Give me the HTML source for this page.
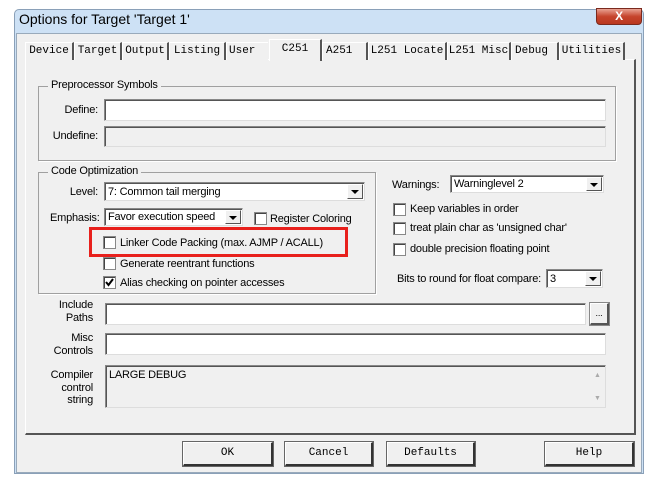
<!DOCTYPE html>
<html><head><meta charset="utf-8"><style>
*{box-sizing:border-box;margin:0;padding:0}
body{width:655px;height:482px;background:#fff;position:relative;overflow:hidden;font-family:"Liberation Sans",sans-serif;font-size:11px;letter-spacing:-0.2px;color:#000}
.a{position:absolute;white-space:nowrap}
.win{left:14px;top:9px;width:630px;height:465px;background:#cde1f5;border:1px solid #8aa0b8;border-radius:5px 5px 0 0}
.client{left:16px;top:33px;width:626px;height:440px;background:#f0f0f0;border:1px solid #9ab}
.title{left:19px;top:11px;font-size:14px;letter-spacing:0}
.close{left:596px;top:8px;width:46px;height:17px;border-radius:0 0 4px 4px;background:linear-gradient(#e9a293,#c6442d 50%,#b9381f);border:1px solid #7a2a1e;color:#fff;font-weight:bold;text-align:center;font-size:12px;line-height:15px}
.panel{left:25px;top:59px;width:611px;height:376px;background:#f0f0f0;border:1px solid #fff;border-right:2px solid #555;border-bottom:2px solid #555}
.tab{top:42px;height:18px;border:1px solid #fff;border-right:2px solid #555;border-bottom:none;font-family:"Liberation Mono",monospace;font-size:11px;letter-spacing:0;line-height:16px;text-align:center;background:#f0f0f0}
.sel{top:39px;height:22px;z-index:2}
.grp{border:1px solid #a0a0a0;box-shadow:1px 1px 0 #fff}
.leg{background:#f0f0f0;padding:0 3px}
.in{background:#fff;border:1px solid #888;border-right-color:#ddd;border-bottom-color:#ddd;box-shadow:inset 1px 1px 0 #555}
.dis{background:#f0f0f0}
.sl{background:#fff;border:1px solid #888;border-right-color:#ddd;border-bottom-color:#ddd;box-shadow:inset 1px 1px 0 #555;padding:1px 0 0 3px;line-height:16px;overflow:hidden}
.dd{position:absolute;right:1px;top:1px;width:16px;height:calc(100% - 2px);background:#f0f0f0;border:1px solid #fff;border-right-color:#555;border-bottom-color:#555}
.dd:after{content:"";position:absolute;left:3px;top:5px;border-left:4px solid transparent;border-right:4px solid transparent;border-top:4px solid #000}
.cb{width:13px;height:13px;background:#fff;border:1px solid #888;box-shadow:inset 1px 1px 0 #444}
.btn{top:442px;height:24px;border:1px solid #fff;border-right:2px solid #333;border-bottom:2px solid #333;outline:1px solid #666;font-family:"Liberation Mono",monospace;font-size:11px;letter-spacing:0;text-align:center;line-height:20px;background:#f0f0f0}
.r{text-align:right}
</style></head><body>
<div class="a win"></div>
<div class="a title">Options for Target 'Target 1'</div>
<div class="a close">X</div>
<div class="a client"></div>
<div class="a panel"></div>
<div class="a tab" style="left:25px;width:49px">Device</div>
<div class="a tab" style="left:74px;width:48px">Target</div>
<div class="a tab" style="left:122px;width:47px">Output</div>
<div class="a tab" style="left:169px;width:57px">Listing</div>
<div class="a tab" style="left:226px;width:42px;border-right:none;text-align:left;padding-left:2px">User</div>
<div class="a tab sel" style="left:269px;width:53px;line-height:18px">C251</div>
<div class="a tab" style="left:322px;width:46px;text-align:left;padding-left:3px">A251</div>
<div class="a tab" style="left:368px;width:79px">L251 Locate</div>
<div class="a tab" style="left:447px;width:64px">L251 Misc</div>
<div class="a tab" style="left:511px;width:48px;text-align:left;padding-left:3px">Debug</div>
<div class="a tab" style="left:559px;width:66px">Utilities</div>

<div class="a grp" style="left:38px;top:86px;width:578px;height:75px"></div>
<div class="a leg" style="left:48px;top:79px">Preprocessor Symbols</div>
<div class="a r" style="left:40px;top:104px;width:58px">Define:</div>
<div class="a in" style="left:104px;top:99px;width:502px;height:22px"></div>
<div class="a r" style="left:40px;top:130px;width:58px">Undefine:</div>
<div class="a in dis" style="left:104px;top:126px;width:502px;height:21px"></div>

<div class="a grp" style="left:38px;top:172px;width:338px;height:122px"></div>
<div class="a leg" style="left:48px;top:165px">Code Optimization</div>
<div class="a r" style="left:40px;top:186px;width:58px">Level:</div>
<div class="a sl" style="left:104px;top:182px;width:261px;height:19px">7: Common tail merging<div class="dd"></div></div>
<div class="a" style="left:50px;top:212px">Emphasis:</div>
<div class="a sl" style="left:104px;top:208px;width:139px;height:18px;line-height:15px">Favor execution speed<div class="dd"></div></div>
<div class="a cb" style="left:254px;top:212px"></div>
<div class="a" style="left:270px;top:213px">Register Coloring</div>
<div class="a cb" style="left:103px;top:257px"></div>
<div class="a" style="left:120px;top:258px">Generate reentrant functions</div>
<div class="a cb" style="left:103px;top:276px"></div>
<svg class="a" style="left:103px;top:276px" width="13" height="13"><path d="M3 6 L5.5 9 L10 3" stroke="#000" stroke-width="2" fill="none"/></svg>
<div class="a" style="left:120px;top:277px">Alias checking on pointer accesses</div>
<div class="a" style="left:89px;top:227px;width:259px;height:30px;border:3px solid #e8201c;background:#f0f0f0"></div>
<div class="a cb" style="left:103px;top:236px"></div>
<div class="a" style="left:120px;top:237px">Linker Code Packing (max. AJMP / ACALL)</div>

<div class="a" style="left:392px;top:179px">Warnings:</div>
<div class="a sl" style="left:450px;top:175px;width:154px;height:18px;line-height:15px">Warninglevel 2<div class="dd"></div></div>
<div class="a cb" style="left:393px;top:203px"></div>
<div class="a" style="left:410px;top:203px">Keep variables in order</div>
<div class="a cb" style="left:393px;top:222px"></div>
<div class="a" style="left:410px;top:222px">treat plain char as 'unsigned char'</div>
<div class="a cb" style="left:393px;top:243px"></div>
<div class="a" style="left:410px;top:243px">double precision floating point</div>
<div class="a" style="left:397px;top:273px">Bits to round for float compare:</div>
<div class="a sl" style="left:546px;top:269px;width:57px;height:19px">3<div class="dd"></div></div>

<div class="a r" style="left:40px;top:299px;width:53px;line-height:13px">Include<br>Paths</div>
<div class="a in" style="left:105px;top:303px;width:481px;height:22px"></div>
<div class="a" style="left:590px;top:303px;width:19px;height:22px;border:1px solid #fff;border-right:2px solid #555;border-bottom:2px solid #555;outline:1px solid #888;font-size:9px;text-align:center;line-height:18px">...</div>
<div class="a r" style="left:40px;top:332px;width:53px;line-height:13px">Misc<br>Controls</div>
<div class="a in" style="left:105px;top:333px;width:501px;height:22px"></div>
<div class="a r" style="left:40px;top:369px;width:53px;line-height:12.5px">Compiler<br>control<br>string</div>
<div class="a in dis" style="left:105px;top:365px;width:501px;height:43px;padding:3px 3px">LARGE DEBUG</div>
<div class="a" style="left:594px;top:372px;color:#aaa;font-size:7px">▲</div>
<div class="a" style="left:594px;top:395px;color:#aaa;font-size:7px">▼</div>

<div class="a btn" style="left:183px;width:90px">OK</div>
<div class="a btn" style="left:285px;width:88px">Cancel</div>
<div class="a btn" style="left:387px;width:88px">Defaults</div>
<div class="a btn" style="left:545px;width:89px">Help</div>
</body></html>
